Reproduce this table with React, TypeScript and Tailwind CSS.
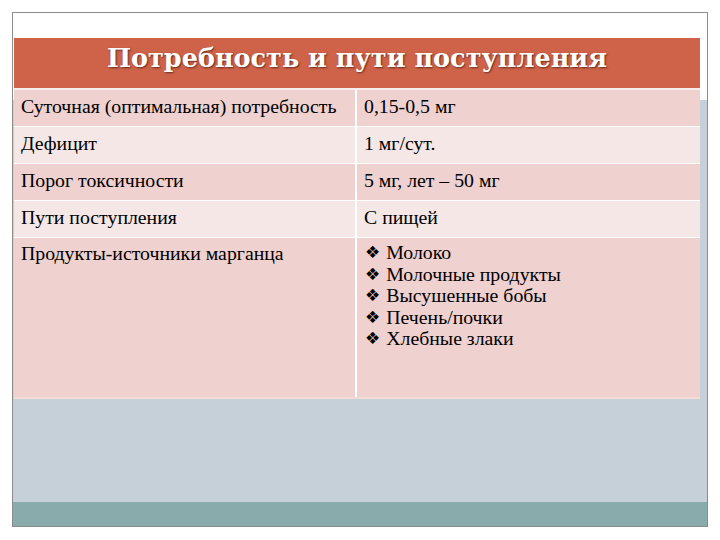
const rows: [string, string][] = [
  ["Суточная (оптимальная) потребность", "0,15-0,5 мг"],
  ["Дефицит", "1 мг/сут."],
  ["Порог токсичности", "5 мг, лет – 50 мг"],
  ["Пути поступления", "С пищей"],
];

const products = ["Молоко", "Молочные продукты", "Высушенные бобы", "Печень/почки", "Хлебные злаки"];

export default function App() {
  return (
    <div className="w-[720px] h-[540px] bg-white pt-[12px] pl-[12px] font-['Liberation_Serif',serif] text-black">
      <div className="w-[696px] h-[515px] border border-[#8c8c8c] pt-[25px] pl-[1px] bg-[linear-gradient(to_bottom,#ffffff_0px,#ffffff_87px,#c6d0d9_87px,#c6d0d9_489px,#8aabac_489px,#8aabac_100%)]">
        <div className="w-[686px] flex flex-col">
          <div className="h-[50px] bg-[#cf6349] flex justify-center pt-[5px]">
            <span className="font-['DejaVu_Serif',serif] text-[25.5px] leading-[30px] font-bold text-white [text-shadow:1px_1px_2px_rgba(60,20,10,0.7)]">
              Потребность и пути поступления
            </span>
          </div>
          <div className="h-[2px] bg-[#f7ecec]" />
          {rows.map(([a, b], i) => (
            <div
              key={a}
              className={`grid grid-cols-[343px_343px] h-[37px] border-b border-white text-[19.8px] leading-[22px] ${
                i % 2 === 0 ? "bg-[#efd1cf]" : "bg-[#f5e7e6]"
              }`}
            >
              <div className="pl-[7px] pt-[5px] border-r-2 border-white">{a}</div>
              <div className="pl-[7px] pt-[5px]">{b}</div>
            </div>
          ))}
          <div className="grid grid-cols-[343px_343px] h-[161px] bg-[#efd1cf] text-[19.8px] leading-[21.5px] border-b-2 border-[#f6dcd6]">
            <div className="pl-[7px] pt-[5px] border-r-2 border-white">Продукты-источники марганца</div>
            <div className="pl-[8px] pt-[4px] flex flex-col">
              {products.map((p) => (
                <div key={p} className="flex items-center gap-[6px]">
                  <span className="font-['DejaVu_Sans',sans-serif] text-[17px] leading-none">❖</span>
                  <span>{p}</span>
                </div>
              ))}
            </div>
          </div>
        </div>
      </div>
    </div>
  );
}
